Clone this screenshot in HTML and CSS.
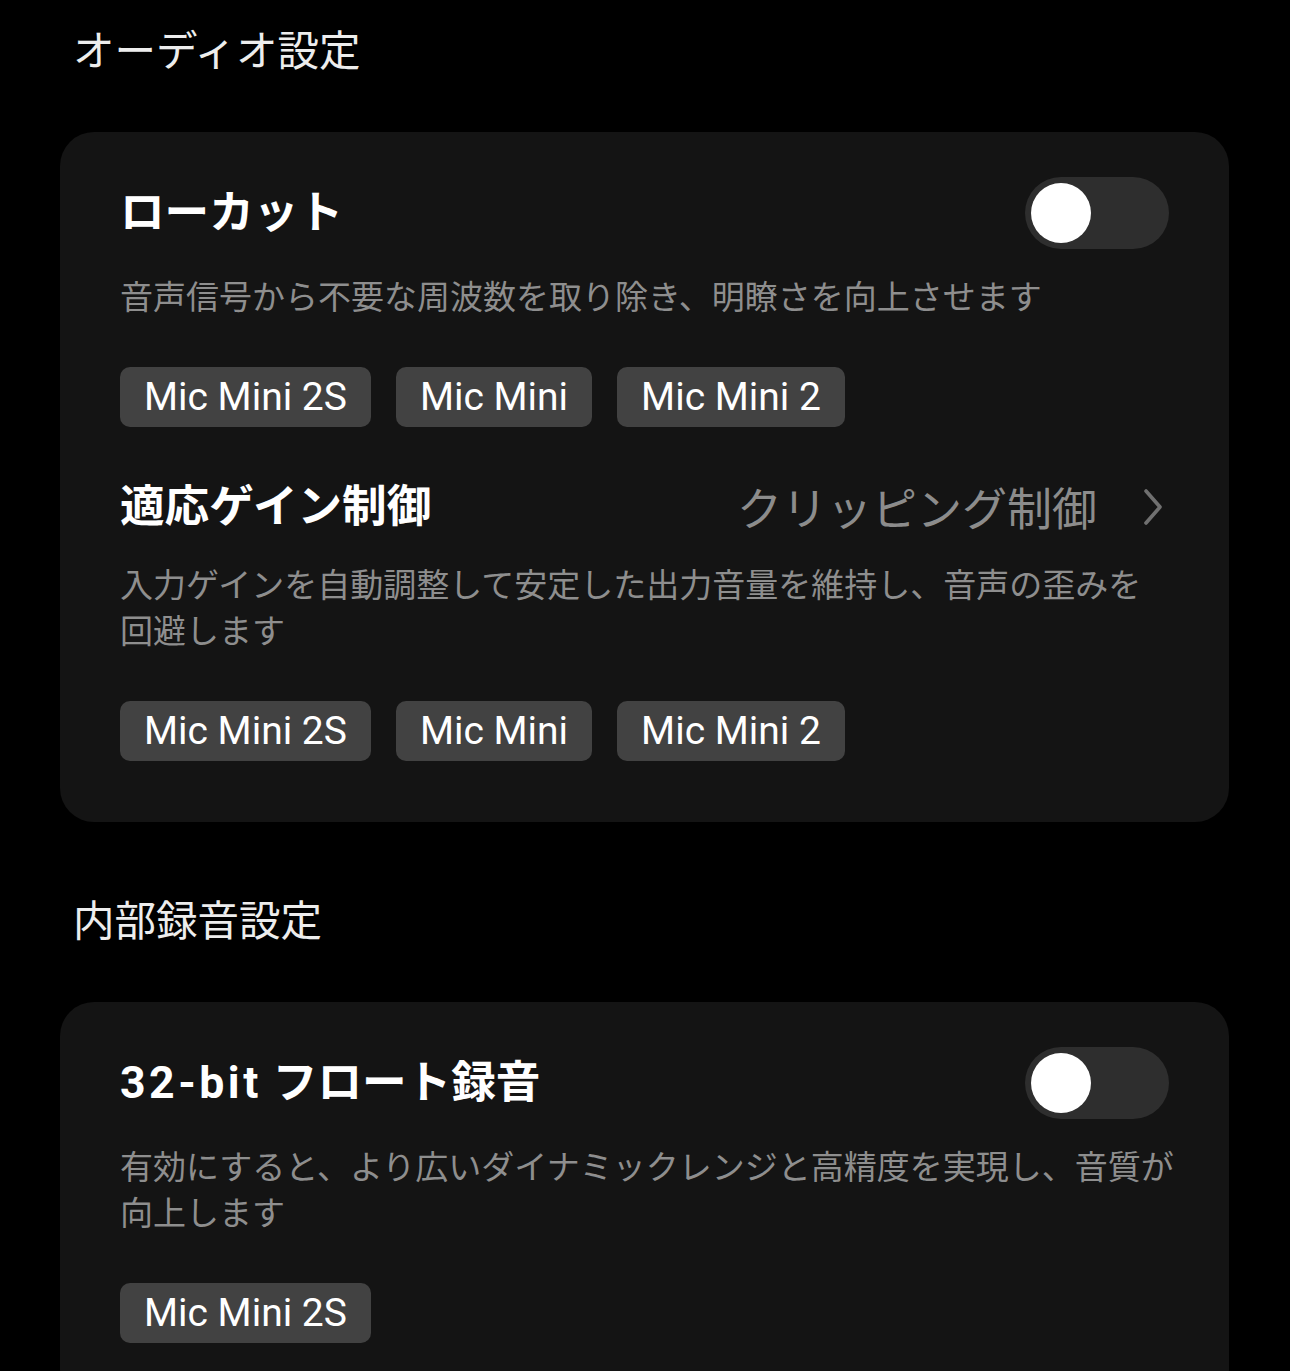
FILE: index.html
```html
<!DOCTYPE html>
<html lang="ja">
<head>
<meta charset="utf-8">
<title>設定</title>
<link rel="stylesheet" href="styles.css">
</head>
<body>
<main class="page">
  <section class="group">
    <h2 class="group-title">オーディオ設定</h2>
    <div class="card">
      <div class="setting">
        <div class="setting-head">
          <span class="setting-title">ローカット</span>
          <span class="toggle"><span class="knob"></span></span>
        </div>
        <p class="setting-desc">音声信号から不要な周波数を取り除き、明瞭さを向上させます</p>
        <ul class="chips">
          <li class="chip">Mic Mini 2S</li>
          <li class="chip">Mic Mini</li>
          <li class="chip">Mic Mini 2</li>
        </ul>
      </div>
      <div class="setting">
        <div class="setting-head setting-head--link">
          <span class="setting-title">適応ゲイン制御</span>
          <span class="setting-value">クリッピング制御
            <svg class="chevron" width="20" height="38" viewBox="0 0 20 38"><path d="M3 3 L17 19 L3 35" fill="none" stroke="currentColor" stroke-width="3.6" stroke-linecap="round" stroke-linejoin="round"/></svg>
          </span>
        </div>
        <p class="setting-desc">入力ゲインを自動調整して安定した出力音量を維持し、音声の歪みを<span class="nowrap">回避します</span></p>
        <ul class="chips">
          <li class="chip">Mic Mini 2S</li>
          <li class="chip">Mic Mini</li>
          <li class="chip">Mic Mini 2</li>
        </ul>
      </div>
    </div>
  </section>
  <section class="group">
    <h2 class="group-title">内部録音設定</h2>
    <div class="card">
      <div class="setting">
        <div class="setting-head">
          <span class="setting-title"><span class="title-latin">32-bit</span> フロート録音</span>
          <span class="toggle"><span class="knob"></span></span>
        </div>
        <p class="setting-desc">有効にすると、より広いダイナミックレンジと高精度を実現し、音質が<span class="nowrap">向上します</span></p>
        <ul class="chips">
          <li class="chip">Mic Mini 2S</li>
        </ul>
      </div>
    </div>
  </section>
</main>
</body>
</html>
```
FILE: styles.css
```css
* { box-sizing: border-box; }
html, body {
  margin: 0;
  background: #000;
}
body {
  font-family: "Noto Sans CJK JP", "Noto Sans", sans-serif;
  color: #fff;
}
.page {
  padding: 20px 61px 0 60px;
}
.group + .group {
  margin-top: 68px;
}
.group-title {
  margin: 0 0 56px;
  padding-left: 13px;
  font-size: 41.5px;
  line-height: 56px;
  font-weight: 400;
  color: #ededed;
}
.card {
  background: #141414;
  border-radius: 34px;
  padding: 45px 60px 61px;
}
.setting + .setting {
  margin-top: 50px;
}
.setting-head {
  display: flex;
  align-items: center;
  justify-content: space-between;
  min-height: 72px;
}
.setting-head--link {
  min-height: 60px;
}
.setting-title {
  font-family: "Roboto", "Noto Sans CJK JP", sans-serif;
  font-size: 44.6px;
  line-height: 60px;
  font-weight: 700;
  color: #fff;
}
.title-latin {
  letter-spacing: 3.5px;
}
.setting-value {
  display: flex;
  align-items: center;
  gap: 46px;
  font-size: 45px;
  line-height: 60px;
  color: #8c8c8c;
  padding-right: 6px;
}
.chevron {
  color: #707070;
  display: block;
}
.toggle {
  width: 144px;
  height: 72px;
  border-radius: 36px;
  background: #2e2e2e;
  padding: 6px;
  display: flex;
  align-items: center;
}
.knob {
  width: 60px;
  height: 60px;
  border-radius: 50%;
  background: #fff;
}
.setting-desc {
  margin: 23px -10px 0 0;
  font-size: 33px;
  line-height: 46px;
  color: #8e8e8e;
}
.nowrap {
  white-space: nowrap;
}
.chips {
  list-style: none;
  margin: 49px 0 0;
  padding: 0;
  display: flex;
  gap: 25px;
}
.chip {
  font-family: "Roboto", "Noto Sans", sans-serif;
  font-size: 39px;
  height: 60px;
  line-height: 60px;
  padding: 0 24px;
  background: #424242;
  border-radius: 10px;
  color: #fff;
}
```
